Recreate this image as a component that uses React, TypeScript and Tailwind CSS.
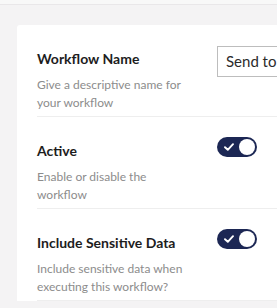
import React from "react";

const Toggle = () => {
  return (
    <div className="relative flex items-center w-10 h-5 rounded-full bg-[#1c2754]">
      <svg className="ml-[7px]" width="10" height="8" viewBox="0 0 10 8" fill="none">
        <path d="M1 4.2 L3.8 6.8 L9 1.2" stroke="white" strokeWidth="1.9" strokeLinecap="round" strokeLinejoin="round" />
      </svg>
      <div className="absolute right-[2px] top-[2px] w-4 h-4 rounded-full bg-white" />
    </div>
  );
};

const rows = [
  { title: "Workflow Name", desc: "Give a descriptive name for your workflow", control: "input" },
  { title: "Active", desc: "Enable or disable the workflow", control: "toggle" },
  { title: "Include Sensitive Data", desc: "Include sensitive data when executing this workflow?", control: "toggle" },
];

const App = () => {
  return (
    <div className="w-[277px] h-[308px] overflow-hidden bg-[#f4f3f4]" style={{ fontFamily: "Lato, 'Open Sans', sans-serif" }}>
      <div className="h-[5px] bg-[#f8f8f8] border-b border-[#e9e7e9]" />
      <div className="ml-[17px] mt-5 w-[300px] bg-white rounded-tl-[3px] pl-5">
        {rows.map((row, i) => (
          <div key={i} className={i > 0 ? "border-t border-[#eeeeee]" : ""}>
            <div className="flex pt-6 pb-1">
              <div className="w-[160px] shrink-0">
                <div className="text-[14px] leading-5 font-bold text-[#1d1d1d]">{row.title}</div>
                <div className="mt-[7px] text-[12px] leading-[18px] text-[#8c8c8c]">{row.desc}</div>
              </div>
              <div className="ml-5">
                {row.control === "input" ? (
                  <div className="-mt-[3px] w-[120px] h-[31px] border border-[#bdbdbd] flex items-center pl-2 text-[15px] text-[#2b2b2b]">
                    Send to
                  </div>
                ) : (
                  <div className="-mt-1">
                    <Toggle />
                  </div>
                )}
              </div>
            </div>
          </div>
        ))}
        <div className="border-t border-[#eeeeee]" />
      </div>
    </div>
  );
};

export default App;
